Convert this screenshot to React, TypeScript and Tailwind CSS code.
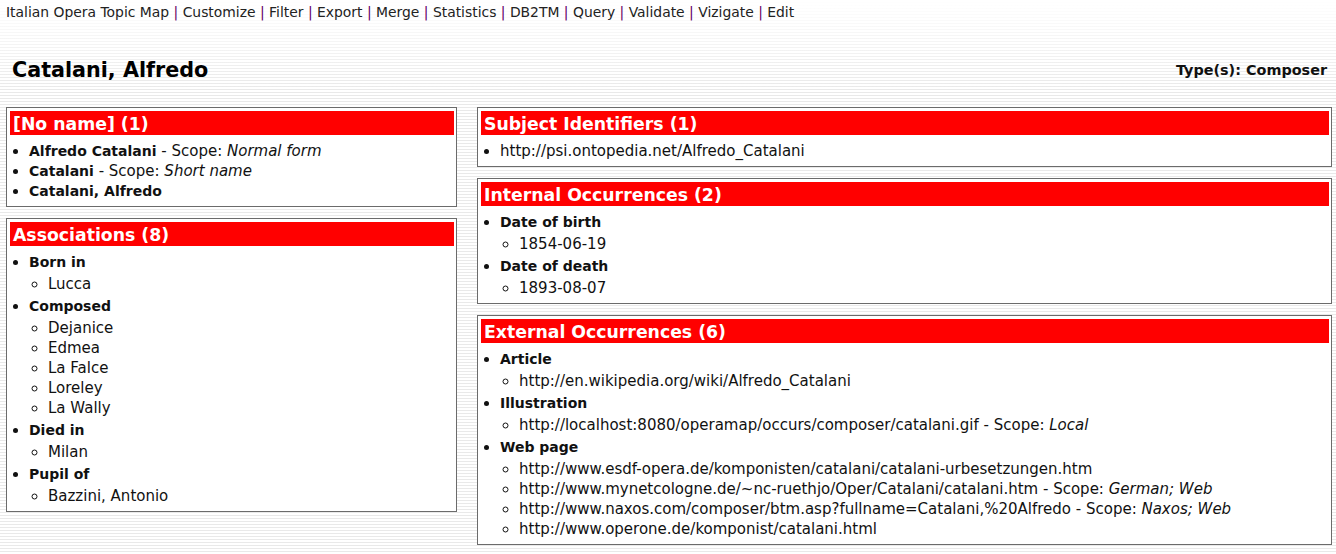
import React from "react";

const font = "font-['DejaVu_Sans',Verdana,sans-serif]";

const Box = ({ title, children }: { title: string; children: React.ReactNode }) => (
  <div className="border border-[#6b6b6b] bg-white p-[3px] pr-[2px]">
    <div className="h-[24px] bg-[#ff0000] px-[3px] text-[17.3px] font-bold leading-[26px] text-white">{title}</div>
    <div className="pt-[6px] pb-[2px]">{children}</div>
  </div>
);

const Sub = ({ items }: { items: React.ReactNode[] }) => (
  <ul className="mt-[2px] list-[circle] pl-[19px]">
    {items.map((it, i) => (
      <li key={i}>{it}</li>
    ))}
  </ul>
);

const Head = ({ children }: { children: React.ReactNode }) => (
  <b className="text-[14px]">{children}</b>
);

const Group = ({ label, items }: { label: string; items: React.ReactNode[] }) => (
  <li className="mt-[2px] first:mt-0">
    <Head>{label}</Head>
    <Sub items={items} />
  </li>
);

const Scope = ({ s }: { s: string }) => (
  <>
    {" "}- Scope: <i>{s}</i>
  </>
);

export default function App() {
  const nav = ["Italian Opera Topic Map", "Customize", "Filter", "Export", "Merge", "Statistics", "DB2TM", "Query", "Validate", "Vizigate", "Edit"];
  return (
    <div
      className={`${font} min-h-[554px] bg-[linear-gradient(to_bottom,#ffffff_0px,rgba(255,255,255,0)_90px),repeating-linear-gradient(to_bottom,#ffffff_0px,#ffffff_2px,#e9e9e9_2px,#e9e9e9_3px)] text-[#111] pb-4`}
    >
      <div className="px-[6px] pt-[3px] text-[13.9px] leading-[18px] text-[#222]">
        {nav.map((n, i) => (
          <span key={n}>
            {i > 0 && <span className="text-[#660066]"> | </span>}
            {n}
          </span>
        ))}
      </div>

      <div className="flex items-center justify-between pl-[12px] pr-[9px] pt-[34px] pb-[22px]">
        <h1 className="text-[20.7px] font-bold leading-[30px] text-black">Catalani, Alfredo</h1>
        <div className="pt-[2px] text-[14.4px] font-bold">Type(s): Composer</div>
      </div>

      <div className="flex items-start gap-[20px] pl-[6px] pr-[4px] text-[15px] leading-[20px]">
        <div className="flex w-[451px] shrink-0 flex-col gap-[11px]">
          <Box title="[No name] (1)">
            <ul className="list-disc pl-[19px]">
              <li><Head>Alfredo Catalani</Head><Scope s="Normal form" /></li>
              <li><Head>Catalani</Head><Scope s="Short name" /></li>
              <li><Head>Catalani, Alfredo</Head></li>
            </ul>
          </Box>
          <Box title="Associations (8)">
            <ul className="list-disc pl-[19px]">
              <Group label="Born in" items={["Lucca"]} />
              <Group label="Composed" items={["Dejanice", "Edmea", "La Falce", "Loreley", "La Wally"]} />
              <Group label="Died in" items={["Milan"]} />
              <Group label="Pupil of" items={["Bazzini, Antonio"]} />
            </ul>
          </Box>
        </div>

        <div className="flex flex-1 flex-col gap-[11px]">
          <Box title="Subject Identifiers (1)">
            <ul className="list-disc pl-[19px]">
              <li>http://psi.ontopedia.net/Alfredo_Catalani</li>
            </ul>
          </Box>
          <Box title="Internal Occurrences (2)">
            <ul className="list-disc pl-[19px]">
              <Group label="Date of birth" items={["1854-06-19"]} />
              <Group label="Date of death" items={["1893-08-07"]} />
            </ul>
          </Box>
          <Box title="External Occurrences (6)">
            <ul className="list-disc pl-[19px]">
              <Group label="Article" items={["http://en.wikipedia.org/wiki/Alfredo_Catalani"]} />
              <Group
                label="Illustration"
                items={[<>http://localhost:8080/operamap/occurs/composer/catalani.gif<Scope s="Local" /></>]}
              />
              <Group
                label="Web page"
                items={[
                  "http://www.esdf-opera.de/komponisten/catalani/catalani-urbesetzungen.htm",
                  <>http://www.mynetcologne.de/~nc-ruethjo/Oper/Catalani/catalani.htm<Scope s="German; Web" /></>,
                  <>http://www.naxos.com/composer/btm.asp?fullname=Catalani,%20Alfredo<Scope s="Naxos; Web" /></>,
                  "http://www.operone.de/komponist/catalani.html",
                ]}
              />
            </ul>
          </Box>
        </div>
      </div>
    </div>
  );
}
